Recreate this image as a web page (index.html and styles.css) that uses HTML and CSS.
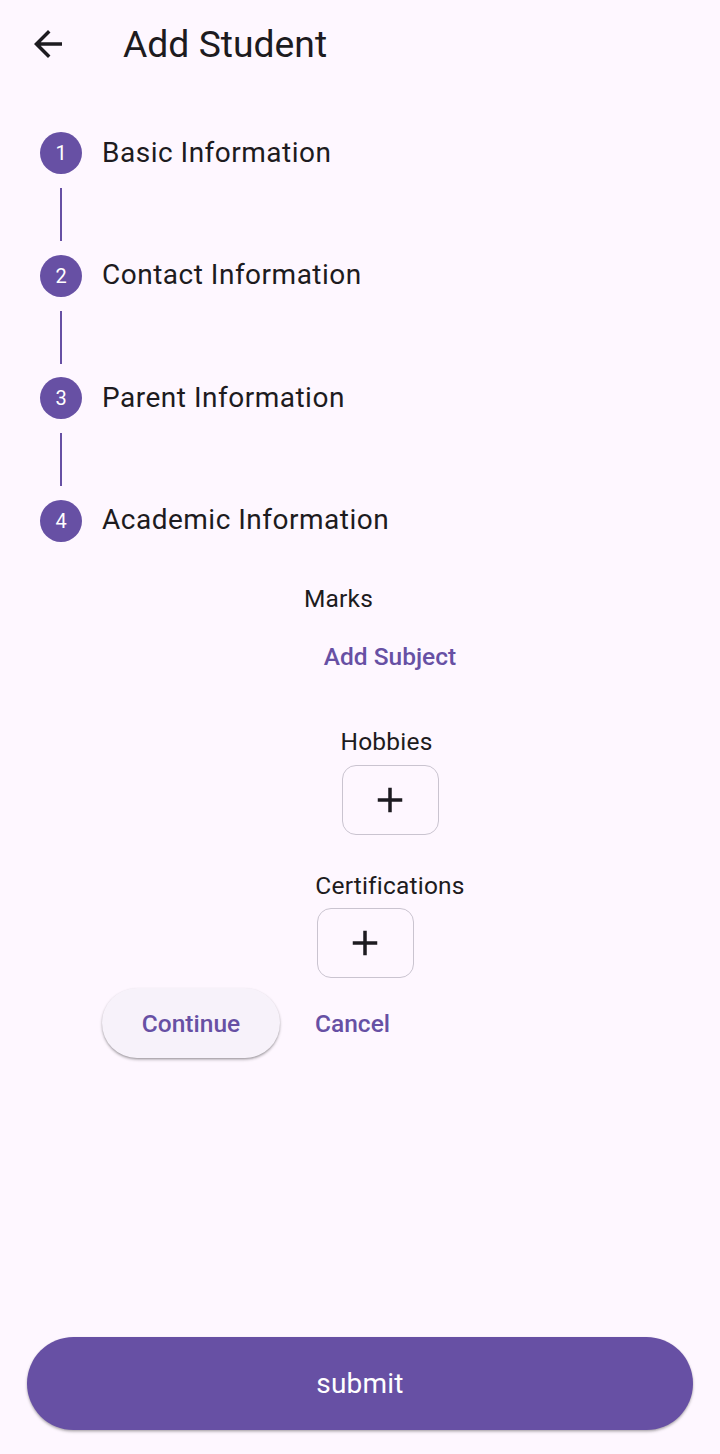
FILE: index.html
```html
<!DOCTYPE html>
<html lang="en">
<head>
<meta charset="utf-8">
<title>Add Student</title>
<link rel="stylesheet" href="styles.css">
</head>
<body>
<div class="page">
  <header class="appbar">
    <span class="back" aria-label="Back">
      <svg viewBox="0 0 24 24" width="42" height="42"><path d="M20 11H7.83l5.59-5.59L12 4l-8 8 8 8 1.41-1.41L7.83 13H20v-2z" fill="#1d1b20"/></svg>
    </span>
    <h1 class="title">Add Student</h1>
  </header>

  <main class="stepper">
    <div class="step">
      <span class="dot">1</span>
      <span class="step-title">Basic Information</span>
    </div>
    <div class="connector"><span class="line"></span></div>
    <div class="step">
      <span class="dot">2</span>
      <span class="step-title">Contact Information</span>
    </div>
    <div class="connector"><span class="line"></span></div>
    <div class="step">
      <span class="dot">3</span>
      <span class="step-title">Parent Information</span>
    </div>
    <div class="connector"><span class="line"></span></div>
    <div class="step">
      <span class="dot">4</span>
      <span class="step-title">Academic Information</span>
    </div>

    <section class="content">
      <div class="label marks">Marks</div>
      <button class="text-btn add-subject">Add Subject</button>
      <div class="label hobbies">Hobbies</div>
      <button class="add-box">
        <svg viewBox="0 0 24 24" width="42" height="42"><path d="M19 13h-6v6h-2v-6H5v-2h6V5h2v6h6v2z" fill="#1d1b20"/></svg>
      </button>
      <div class="label certs">Certifications</div>
      <button class="add-box cert-box">
        <svg viewBox="0 0 24 24" width="42" height="42"><path d="M19 13h-6v6h-2v-6H5v-2h6V5h2v6h6v2z" fill="#1d1b20"/></svg>
      </button>
      <div class="controls">
        <button class="continue">Continue</button>
        <button class="text-btn cancel">Cancel</button>
      </div>
    </section>
  </main>

  <footer class="footer">
    <button class="submit">submit</button>
  </footer>
</div>
</body>
</html>
```

FILE: styles.css
```css
html, body {
  margin: 0;
  padding: 0;
}

body {
  background: #fef7ff;
  font-family: Roboto, "Noto Sans", "Liberation Sans", sans-serif;
  color: #1d1b20;
}

.page {
  display: flex;
  flex-direction: column;
  min-height: 1454px;
  box-sizing: border-box;
}

.appbar {
  display: flex;
  align-items: center;
  height: 88px;
  padding-left: 27px;
}

.back {
  display: flex;
  width: 42px;
  height: 42px;
}

.title {
  margin: 0 0 0 54px;
  font-size: 37.3px;
  font-weight: 400;
  line-height: 44px;
  color: #1d1b20;
}

.stepper {
  display: flex;
  flex-direction: column;
  padding-top: 44px;
}

.step {
  display: flex;
  align-items: center;
  height: 42px;
  padding-left: 40px;
}

.dot {
  width: 42px;
  height: 42px;
  border-radius: 50%;
  background: #6750a4;
  color: #ffffff;
  font-size: 20px;
  display: flex;
  align-items: center;
  justify-content: center;
  flex-shrink: 0;
}

.step-title {
  margin-left: 20px;
  margin-top: -2px;
  font-size: 28px;
  letter-spacing: 0.5px;
  color: #1d1b20;
}

.connector {
  display: flex;
  box-sizing: border-box;
  height: 80.5px;
  padding: 14px 0 13.5px 60px;
}

.line {
  width: 2px;
  background: #6750a4;
}

.content {
  display: flex;
  flex-direction: column;
  align-items: center;
  padding: 42px 42px 0 102px;
}

.label {
  font-size: 24.5px;
  line-height: 29px;
  color: #1d1b20;
  letter-spacing: 0.2px;
}

.marks {
  margin-right: 103px;
}

.text-btn {
  background: none;
  border: none;
  font-family: inherit;
  font-size: 24.5px;
  font-weight: 500;
  color: #6750a4;
  height: 70px;
  padding: 0 21px;
  letter-spacing: 0;
}

.add-subject {
  margin-top: 8.5px;
}

.hobbies {
  margin-top: 35.5px;
  margin-right: 7px;
}

.add-box {
  display: flex;
  align-items: center;
  justify-content: center;
  box-sizing: border-box;
  width: 97px;
  height: 70px;
  margin-top: 9.5px;
  padding: 0;
  border: 1.75px solid #cac4d0;
  border-radius: 14px;
  background: transparent;
}

.certs {
  margin-top: 35.5px;
}

.cert-box {
  margin-top: 8.5px;
  margin-right: 50px;
}

.controls {
  display: flex;
  align-self: stretch;
  align-items: center;
  gap: 14px;
  margin-top: 10px;
}

.continue {
  width: 178px;
  height: 70px;
  border: none;
  border-radius: 35px;
  background: #f7f2fa;
  color: #6750a4;
  font-family: inherit;
  font-size: 24.5px;
  font-weight: 500;
  letter-spacing: 0;
  box-shadow: 0 1.75px 3px rgba(0, 0, 0, 0.28), 0 1px 1.5px rgba(0, 0, 0, 0.12);
}

.footer {
  margin-top: auto;
  padding: 0 27px 24px;
}

.submit {
  display: block;
  width: 100%;
  height: 93px;
  border: none;
  border-radius: 47px;
  background: #6750a4;
  color: #ffffff;
  font-family: inherit;
  font-size: 28px;
  font-weight: 400;
  letter-spacing: 0.2px;
  box-shadow: 0 1.75px 3px rgba(0, 0, 0, 0.25), 0 1px 2px rgba(0, 0, 0, 0.1);
}
```
